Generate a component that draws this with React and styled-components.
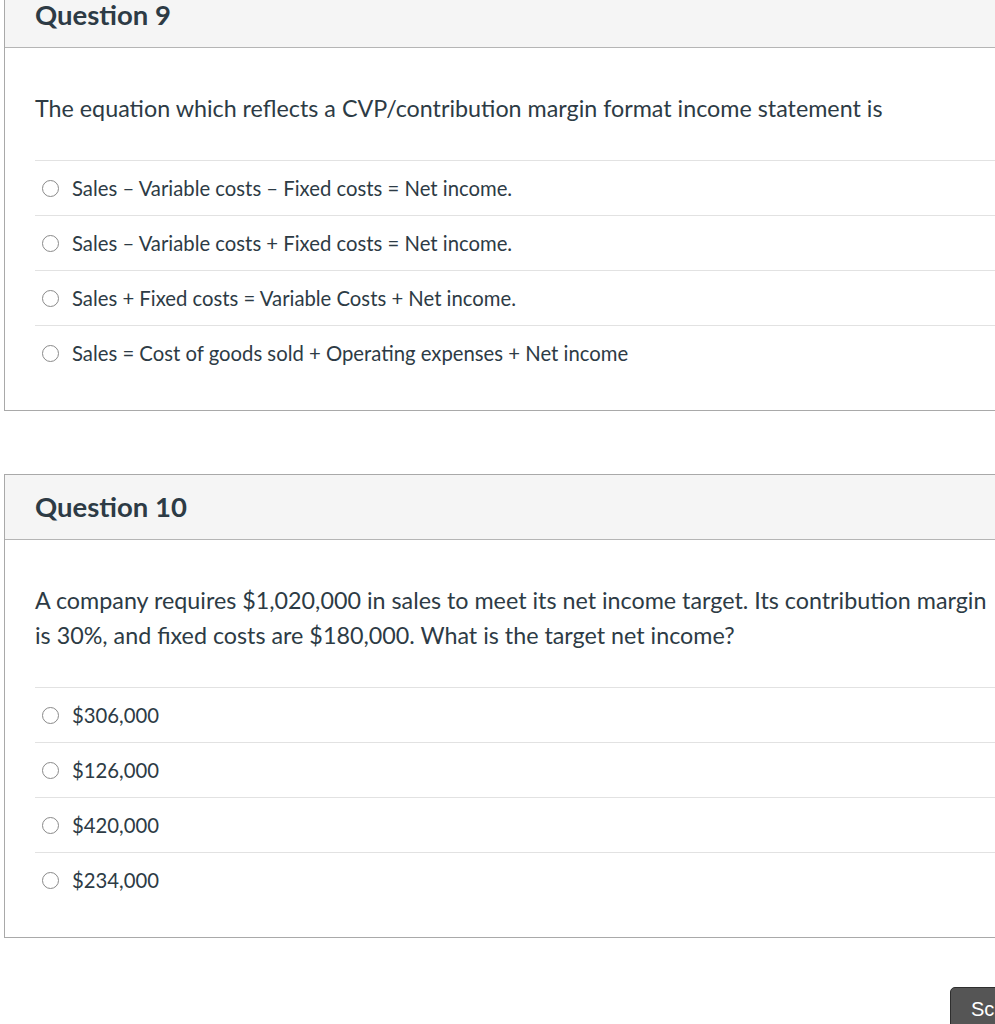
import React from "react";
import styled, { createGlobalStyle } from "styled-components";

const Global = createGlobalStyle`
  html, body {
    margin: 0;
    padding: 0;
    overflow: hidden;
    background: #ffffff;
  }
  body {
    font-family: Lato, "Open Sans", "Liberation Sans", sans-serif;
    color: #2d3b45;
  }
`;

const Page = styled.div`
  width: 1100px;
  margin-top: -18px;
  padding-left: 4px;
  display: flex;
  flex-direction: column;
  gap: 63px;
`;

const Card = styled.section`
  width: 1035px;
  border: 1px solid #a9a9a9;
  background: #ffffff;
`;

const Header = styled.header`
  height: 65px;
  box-sizing: border-box;
  background: #f5f5f5;
  border-bottom: 1px solid #b5b5b5;
  display: flex;
  align-items: center;
  justify-content: space-between;
  padding: 0 10px 2px 30px;
`;

const Title = styled.h2`
  margin: 0;
  font-size: 27.5px;
  font-weight: 700;
  color: #2d3b45;
`;

const Points = styled.span`
  font-size: 16px;
  color: #2d3b45;
`;

const Body = styled.div`
  padding: 43px 0 30px 30px;
`;

const Prompt = styled.p`
  margin: 0 0 34px;
  font-size: 23.3px;
  line-height: 35px;
  max-width: 960px;
`;

const Answers = styled.ul`
  list-style: none;
  margin: 0;
  padding: 0;
`;

const Answer = styled.li`
  height: 55px;
  box-sizing: border-box;
  border-top: 1px solid #e2e2e2;
  display: flex;
  align-items: center;
  gap: 13px;
  padding-left: 7px;
  font-size: 20.3px;
`;

const Radio = styled.span`
  width: 17px;
  height: 17px;
  box-sizing: border-box;
  border: 1px solid #8a8a8a;
  border-radius: 50%;
  background: #fff;
  flex: none;
`;

const Footer = styled.div`
  display: flex;
  justify-content: flex-start;
  padding-left: 946px;
  margin-top: -14px;
`;

const SubmitButton = styled.button`
  height: 44px;
  padding: 0 20px;
  background: #555555;
  color: #ffffff;
  border: 1px solid #2e2e2e;
  border-radius: 5px;
  font-family: "Liberation Sans", Arial, sans-serif;
  font-size: 20px;
  white-space: nowrap;
`;

const questions = [
  {
    title: "Question 9",
    prompt:
      "The equation which reflects a CVP/contribution margin format income statement is",
    answers: [
      "Sales – Variable costs – Fixed costs = Net income.",
      "Sales – Variable costs + Fixed costs = Net income.",
      "Sales + Fixed costs = Variable Costs + Net income.",
      "Sales = Cost of goods sold + Operating expenses + Net income",
    ],
  },
  {
    title: "Question 10",
    prompt:
      "A company requires $1,020,000 in sales to meet its net income target. Its contribution margin is 30%, and fixed costs are $180,000. What is the target net income?",
    answers: ["$306,000", "$126,000", "$420,000", "$234,000"],
  },
];

export default function App() {
  return (
    <>
      <Global />
      <Page>
        {questions.map((q) => (
          <Card key={q.title}>
            <Header>
              <Title>{q.title}</Title>
              <Points>1 pts</Points>
            </Header>
            <Body>
              <Prompt>{q.prompt}</Prompt>
              <Answers>
                {q.answers.map((a) => (
                  <Answer key={a}>
                    <Radio />
                    <span>{a}</span>
                  </Answer>
                ))}
              </Answers>
            </Body>
          </Card>
        ))}
        <Footer>
          <SubmitButton>Scroll</SubmitButton>
        </Footer>
      </Page>
    </>
  );
}
